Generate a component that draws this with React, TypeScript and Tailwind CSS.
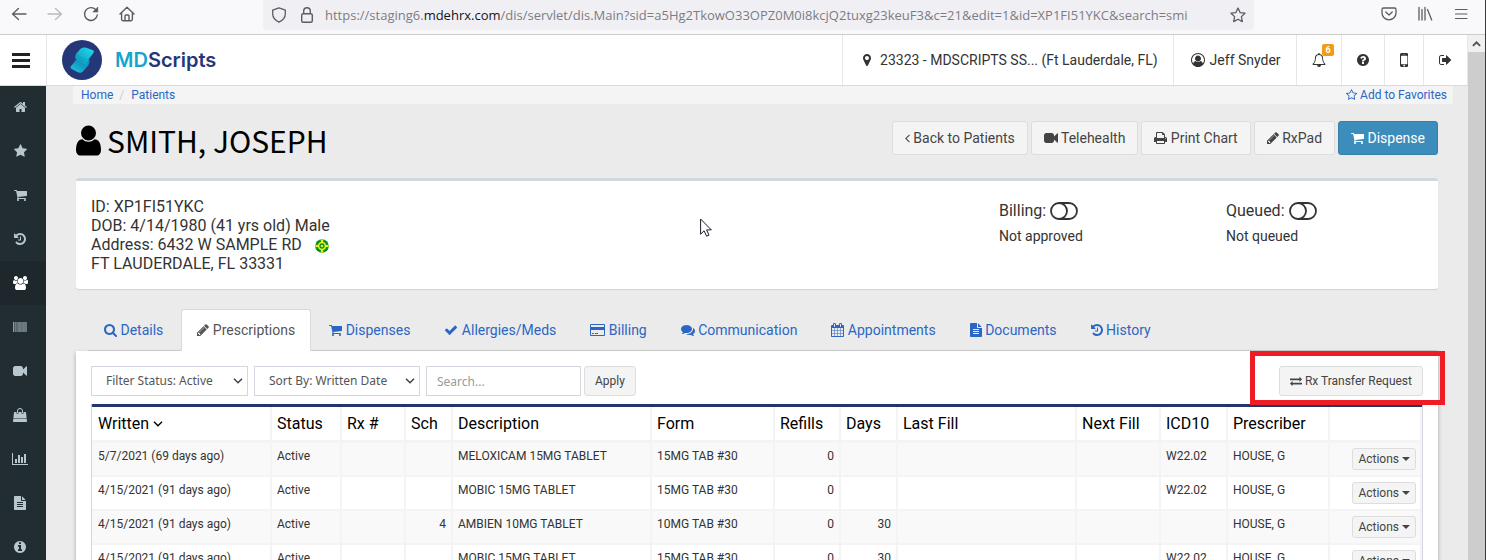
import type { ReactNode } from "react";

type IconDef = { box: string; d: string };

const ICONS = {
  home: {
    box: "64 0 1664 1792",
    d: "M1472 992v480q0 26-19 45t-45 19h-384v-384h-256v384h-384q-26 0-45-19t-19-45v-480q0-1 .5-3t.5-3l575-474 575 474q1 2 1 6zm223-69l-62 74q-8 9-21 11h-3q-13 0-21-7l-692-577-692 577q-12 8-24 7-13-2-21-11l-62-74q-8-10-7-23.5t11-21.5l719-599q32-26 76-26t76 26l244 204v-195q0-14 9-23t23-9h192q14 0 23 9t9 23v408l219 182q10 8 11 21.5t-7 23.5z",
  },
  star: {
    box: "64 0 1664 1792",
    d: "M1728 647q0 22-26 48l-363 354 86 500q1 7 1 20 0 21-10.5 35.5t-30.5 14.5q-19 0-40-12l-449-236-449 236q-22 12-40 12-21 0-31.5-14.5t-10.5-35.5q0-6 2-20l86-500-364-354q-25-27-25-48 0-37 56-46l502-73 225-455q19-41 49-41t49 41l225 455 502 73q56 9 56 46z",
  },
  starOutline: {
    box: "64 0 1664 1792",
    d: "M1201 1004l306-297-422-62-189-382-189 382-422 62 306 297-73 421 378-199 377 199zm527-357q0 22-26 48l-363 354 86 500q1 7 1 20 0 50-41 50-19 0-40-12l-449-236-449 236q-22 12-40 12-21 0-31.5-14.5t-10.5-35.5q0-6 2-20l86-500-364-354q-25-27-25-48 0-37 56-46l502-73 225-455q19-41 49-41t49 41l225 455 502 73q56 9 56 46z",
  },
  cart: {
    box: "64 0 1664 1792",
    d: "M704 1536q0 52-38 90t-90 38-90-38-38-90 38-90 90-38 90 38 38 90zm896 0q0 52-38 90t-90 38-90-38-38-90 38-90 90-38 90 38 38 90zm128-1088v512q0 24-16.5 42.5t-40.5 21.5l-1044 122q13 60 13 70 0 16-24 64h920q26 0 45 19t19 45-19 45-45 19h-1024q-26 0-45-19t-19-45q0-11 8-31.5t16-36 21.5-40 15.5-29.5l-177-823h-204q-26 0-45-19t-19-45 19-45 45-19h256q16 0 28.5 6.5t19.5 15.5 13 24.5 8 26 5.5 29.5 4.5 26h1201q26 0 45 19t19 45z",
  },
  history: {
    box: "128 0 1536 1792",
    d: "M1664 896q0 156-61 298t-164 245-245 164-298 61q-172 0-327-72.5t-264-204.5q-7-10-6.5-22.5t8.5-20.5l137-138q10-9 25-9 16 2 23 12 73 95 179 147t225 52q104 0 198.5-40.5t163.5-109.5 109.5-163.5 40.5-198.5-40.5-198.5-109.5-163.5-163.5-109.5-198.5-40.5q-98 0-188 35.5t-160 101.5l137 138q31 30 14 69-17 40-59 40h-448q-26 0-45-19t-19-45v-448q0-42 40-59 39-17 69 14l130 129q107-101 244.5-156.5t284.5-55.5q156 0 298 61t245 164 164 245 61 298zm-640-288v448q0 14-9 23t-23 9h-320q-14 0-23-9t-9-23v-64q0-14 9-23t23-9h224v-352q0-14 9-23t23-9h64q14 0 23 9t9 23z",
  },
  users: {
    box: "64 0 1920 1792",
    d: "M657 896q-162 5-265 128h-134q-82 0-138-40.5t-56-118.5q0-353 124-353 6 0 43.5 21t97.5 42.5 119 21.5q67 0 133-23-5 37-5 66 0 159 93 283zm1071 637q0 120-73 189.5t-194 69.5h-874q-121 0-194-69.5t-73-189.5q0-53 3.5-103.5t14-109 26.5-108.5 43-97.5 62-81 85.5-53.5 111.5-20q10 0 43 21.5t73 48 107 48 135 21.5 135-21.5 107-48 73-48 43-21.5q61 0 111.5 20t85.5 53.5 62 81 43 97.5 26.5 108.5 14 109 3.5 103.5zm-1024-1277q0 106-75 181t-181 75-181-75-75-181 75-181 181-75 181 75 75 181zm704 384q0 159-112.5 271.5t-271.5 112.5-271.5-112.5-112.5-271.5 112.5-271.5 271.5-112.5 271.5 112.5 112.5 271.5zm576 225q0 78-56 118.5t-138 40.5h-134q-103-123-265-128 93-124 93-283 0-29-5-66 66 23 133 23 59 0 119-21.5t97.5-42.5 43.5-21q124 0 124 353zm-128-609q0 106-75 181t-181 75-181-75-75-181 75-181 181-75 181 75 75 181z",
  },
  barcode: {
    box: "0 0 1792 1792",
    d: "M0 256h63v1280h-63zM94 256h32v1280h-32zM190 256h31v1280h-31zM346 256h31v1280h-31zM503 256h62v1280h-62zM659 256h32v1280h-32zM722 256h31v1280h-31zM785 256h31v1280h-31zM942 256h62v1280h-62zM1099 256h62v1280h-62zM1224 256h62v1280h-62zM1318 256h32v1280h-32zM1444 256h62v1280h-62zM1601 256h62v1280h-62zM1695 256h32v1280h-32zM1760 256h32v1280h-32zM250 256h40v1280h-40zM420 256h40v1280h-40zM860 256h40v1280h-40zM1380 256h30v1280h-30z",
  },
  video: {
    box: "0 0 1792 1792",
    d: "M1792 352v1088q0 42-39 59-13 5-25 5-27 0-45-19l-403-403v166q0 119-84.5 203.5t-203.5 84.5h-704q-119 0-203.5-84.5t-84.5-203.5v-704q0-119 84.5-203.5t203.5-84.5h704q119 0 203.5 84.5t84.5 203.5v165l403-402q18-19 45-19 12 0 25 5 39 17 39 59z",
  },
  bag: {
    box: "0 0 1792 1792",
    d: "M1757 1408l35 313q3 28-16 50-19 21-48 21h-1664q-29 0-48-21-19-22-16-50l35-313h1722zm-93-839l86 775h-1708l86-775q3-24 21-40.5t43-16.5h256v128q0 53 37.5 90.5t90.5 37.5 90.5-37.5 37.5-90.5v-128h384v128q0 53 37.5 90.5t90.5 37.5 90.5-37.5 37.5-90.5v-128h256q25 0 43 16.5t21 40.5zm-384-185v256q0 26-19 45t-45 19-45-19-19-45v-256q0-106-75-181t-181-75-181 75-75 181v256q0 26-19 45t-45 19-45-19-19-45v-256q0-159 112.5-271.5t271.5-112.5 271.5 112.5 112.5 271.5z",
  },
  chart: {
    box: "0 0 2048 1792",
    d: "M640 896v512h-256v-512h256zm384-512v1024h-256v-1024h256zm1024 1152v128h-2048v-1536h128v1408h1920zm-640-896v768h-256v-768h256zm384-384v1152h-256v-1152h256z",
  },
  file: {
    box: "128 0 1536 1792",
    d: "M1596 476q14 14 28 36h-472v-472q22 14 36 28zm-476 164h544v1056q0 40-28 68t-68 28h-1344q-40 0-68-28t-28-68v-1600q0-40 28-68t68-28h800v544q0 40 28 68t68 28zm160 736v-64q0-14-9-23t-23-9h-704q-14 0-23 9t-9 23v64q0 14 9 23t23 9h704q14 0 23-9t9-23zm0-256v-64q0-14-9-23t-23-9h-704q-14 0-23 9t-9 23v64q0 14 9 23t23 9h704q14 0 23-9t9-23zm0-256v-64q0-14-9-23t-23-9h-704q-14 0-23 9t-9 23v64q0 14 9 23t23 9h704q14 0 23-9t9-23z",
  },
  info: {
    box: "128 0 1536 1792",
    d: "M1152 1376v-160q0-14-9-23t-23-9h-96v-512q0-14-9-23t-23-9h-320q-14 0-23 9t-9 23v160q0 14 9 23t23 9h96v320h-96q-14 0-23 9t-9 23v160q0 14 9 23t23 9h448q14 0 23-9t9-23zm-128-896v-160q0-14-9-23t-23-9h-192q-14 0-23 9t-9 23v160q0 14 9 23t23 9h192q14 0 23-9t9-23zm640 416q0 209-103 385.5t-279.5 279.5-385.5 103-385.5-103-279.5-279.5-103-385.5 103-385.5 279.5-279.5 385.5-103 385.5 103 279.5 279.5 103 385.5z",
  },
  question: {
    box: "128 0 1536 1792",
    d: "M1024 1376v-192q0-14-9-23t-23-9h-192q-14 0-23 9t-9 23v192q0 14 9 23t23 9h192q14 0 23-9t9-23zm256-672q0-88-55.5-163t-138.5-116-170-41q-243 0-371 213-15 24 8 42l132 100q7 6 19 6 16 0 25-12 53-68 86-92 34-24 86-24 48 0 85.5 26t37.5 59q0 38-20 61t-68 45q-63 28-115.5 86.5t-52.5 125.5v36q0 14 9 23t23 9h192q14 0 23-9t9-23q0-19 21.5-49.5t54.5-49.5q32-18 49-28.5t46-35 44.5-48 28-60.5 12.5-81zm384 192q0 209-103 385.5t-279.5 279.5-385.5 103-385.5-103-279.5-279.5-103-385.5 103-385.5 279.5-279.5 385.5-103 385.5 103 279.5 279.5 103 385.5z",
  },
  user: {
    box: "256 0 1280 1792",
    d: "M1536 1399q0 109-62.5 187t-150.5 78h-854q-88 0-150.5-78t-62.5-187q0-85 8.5-160.5t31.5-152 58.5-131 94-89 134.5-34.5q131 128 313 128t313-128q76 0 134.5 34.5t94 89 58.5 131 31.5 152 8.5 160.5zm-256-887q0 159-112.5 271.5t-271.5 112.5-271.5-112.5-112.5-271.5 112.5-271.5 271.5-112.5 271.5 112.5 112.5 271.5z",
  },
  marker: {
    box: "384 0 1024 1792",
    d: "M1152 640q0-106-75-181t-181-75-181 75-75 181 75 181 181 75 181-75 75-181zm256 0q0 109-33 179l-364 774q-16 33-47.5 52t-67.5 19-67.5-19-46.5-52l-365-774q-33-70-33-179 0-212 150-362t362-150 362 150 150 362z",
  },
  userCircle: {
    box: "0 0 1792 1792",
    d: "M896 0q182 0 348 71t286 191 191 286 71 348q0 181-70.5 347t-190.5 286-286 191.5-349 71.5-349-71-285.5-191.5-190.5-286-71-347.5 71-348 191-286 286-191 348-71zm619 1351q149-205 149-455 0-156-61-298t-164-245-245-164-298-61-298 61-245 164-164 245-61 298q0 250 149 455 66-327 306-327 131 128 313 128t313-128q240 0 306 327zm-235-647q0-159-112.5-271.5t-271.5-112.5-271.5 112.5-112.5 271.5 112.5 271.5 271.5 112.5 271.5-112.5 112.5-271.5z",
  },
  bell: {
    box: "0 0 1792 1792",
    d: "M912 1696q0-16-16-16-59 0-101.5-42.5t-42.5-101.5q0-16-16-16t-16 16q0 73 51.5 124.5t124.5 51.5q16 0 16-16zm-666-288h1300q-266-300-266-832 0-51-24-105t-69-103-121.5-80.5-169.5-31.5-169.5 31.5-121.5 80.5-69 103-24 105q0 532-266 832zm1482 0q0 52-38 90t-90 38h-448q0 106-75 181t-181 75-181-75-75-181h-448q-52 0-90-38t-38-90q50-42 91-88t85-119.5 74.5-158.5 50-206 19.5-260q0-152 117-282.5t307-158.5q-8-19-8-39 0-40 28-68t68-28 68 28 28 68q0 20-8 39 190 28 307 158.5t117 282.5q0 139 19.5 260t50 206 74.5 158.5 85 119.5 91 88z",
  },
  mobile: {
    box: "512 256 768 1280",
    d: "M976 1408q0-33-23.5-56.5t-56.5-23.5-56.5 23.5-23.5 56.5 23.5 56.5 56.5 23.5 56.5-23.5 23.5-56.5zm208-160v-704q0-13-9.5-22.5t-22.5-9.5h-512q-13 0-22.5 9.5t-9.5 22.5v704q0 13 9.5 22.5t22.5 9.5h512q13 0 22.5-9.5t9.5-22.5zm-192-848q0-16-16-16h-160q-16 0-16 16t16 16h160q16 0 16-16zm288-16v1024q0 52-38 90t-90 38h-512q-52 0-90-38t-38-90v-1024q0-52 38-90t90-38h512q52 0 90 38t38 90z",
  },
  signOut: {
    box: "64 0 1664 1792",
    d: "M704 1440q0 4 1 20t.5 26.5-3 23.5-10 19.5-20.5 6.5h-320q-119 0-203.5-84.5t-84.5-203.5v-704q0-119 84.5-203.5t203.5-84.5h320q13 0 22.5 9.5t9.5 22.5q0 4 1 20t.5 26.5-3 23.5-10 19.5-20.5 6.5h-320q-66 0-113 47t-47 113v704q0 66 47 113t113 47h312l11.5 1 11.5 3 8 5.5 7 9 2 13.5zm928-544q0 26-19 45l-544 544q-19 19-45 19t-45-19-19-45v-288h-448q-26 0-45-19t-19-45v-384q0-26 19-45t45-19h448v-288q0-26 19-45t45-19 45 19l544 544q19 19 19 45z",
  },
  pencil: {
    box: "128 0 1536 1792",
    d: "M491 1536l91-91-235-235-91 91v107h128v128h107zm523-928q0-22-22-22-10 0-17 7l-542 542q-7 7-7 17 0 22 22 22 10 0 17-7l542-542q7-7 7-17zm-54-192l416 416-832 832h-416v-416zm683 96q0 53-37 90l-166 166-416-416 166-165q36-38 90-38 53 0 91 38l235 234q37 39 37 91z",
  },
  search: {
    box: "64 0 1664 1792",
    d: "M1216 832q0-185-131.5-316.5t-316.5-131.5-316.5 131.5-131.5 316.5 131.5 316.5 316.5 131.5 316.5-131.5 131.5-316.5zm512 832q0 52-38 90t-90 38q-54 0-90-38l-343-342q-179 124-399 124-143 0-273.5-55.5t-225-150-150-225-55.5-273.5 55.5-273.5 150-225 225-150 273.5-55.5 273.5 55.5 225 150 150 225 55.5 273.5q0 220-124 399l343 343q37 37 37 90z",
  },
  print: {
    box: "64 0 1664 1792",
    d: "M448 1536h896v-256h-896v256zm0-640h896v-384h-160q-40 0-68-28t-28-68v-160h-640v640zm1152 64q0-26-19-45t-45-19-45 19-19 45 19 45 45 19 45-19 19-45zm128 0v416q0 13-9.5 22.5t-22.5 9.5h-224v160q0 40-28 68t-68 28h-960q-40 0-68-28t-28-68v-160h-224q-13 0-22.5-9.5t-9.5-22.5v-416q0-79 56.5-135.5t135.5-56.5h64v-544q0-40 28-68t68-28h672q40 0 88 20t76 48l152 152q28 28 48 76t20 88v256h64q79 0 135.5 56.5t56.5 135.5z",
  },
  check: {
    box: "0 0 1792 1792",
    d: "M1671 566q0 40-28 68l-724 724-136 136q-28 28-68 28t-68-28l-136-136-362-362q-28-28-28-68t28-68l136-136q28-28 68-28t68 28l294 295 656-657q28-28 68-28t68 28l136 136q28 28 28 68z",
  },
  card: {
    box: "0 0 1920 1792",
    d: "M1760 128q66 0 113 47t47 113v1216q0 66-47 113t-113 47h-1600q-66 0-113-47t-47-113v-1216q0-66 47-113t113-47h1600zm-1600 128q-13 0-22.5 9.5t-9.5 22.5v224h1664v-224q0-13-9.5-22.5t-22.5-9.5h-1600zm1600 1280q13 0 22.5-9.5t9.5-22.5v-608h-1664v608q0 13 9.5 22.5t22.5 9.5h1600zm-1504-128v-128h256v128h-256zm384 0v-128h384v128h-384z",
  },
  comments: {
    box: "0 0 1792 1792",
    d: "M1408 768q0 139-94 257t-256.5 186.5-353.5 68.5q-86 0-176-16-124 88-278 128-36 9-86 16h-3q-11 0-20.5-8t-11.5-21q-1-3-1-6.5t.5-6.5 2-6l2.5-5 3.5-5.5 4-5 4.5-5 4-4.5q5-6 23-25t26-29.5 22.5-29 25-38.5 20.5-44q-124-72-195-177t-71-224q0-139 94-257t256.5-186.5 353.5-68.5 353.5 68.5 256.5 186.5 94 257zm384 256q0 120-71 224.5t-195 176.5q10 24 20.5 44t25 38.5 22.5 29 26 29.5 23 25q1 1 4 4.5t4.5 5 4 5 3.5 5.5l2.5 5 2 6 .5 6.5-1 6.5q-3 14-13 22t-22 7q-50-7-86-16-154-40-278-128-90 16-176 16-271 0-472-132 58 4 88 4 161 0 309-45t264-129q125-92 192-212t67-254q0-77-23-152 129 71 204 178t75 230z",
  },
  calendar: {
    box: "64 0 1664 1792",
    d: "M192 1664h288v-288h-288v288zm352 0h320v-288h-320v288zm-352-352h288v-320h-288v320zm352 0h320v-320h-320v320zm-352-384h288v-288h-288v288zm736 736h320v-288h-320v288zm-384-736h320v-288h-320v288zm768 736h288v-288h-288v288zm-384-352h320v-320h-320v320zm-352-864v-288q0-13-9.5-22.5t-22.5-9.5h-64q-13 0-22.5 9.5t-9.5 22.5v288q0 13 9.5 22.5t22.5 9.5h64q13 0 22.5-9.5t9.5-22.5zm736 864h288v-320h-288v320zm-384-384h320v-288h-320v288zm384 0h288v-288h-288v288zm32-480v-288q0-13-9.5-22.5t-22.5-9.5h-64q-13 0-22.5 9.5t-9.5 22.5v288q0 13 9.5 22.5t22.5 9.5h64q13 0 22.5-9.5t9.5-22.5zm384-64v1280q0 52-38 90t-90 38h-1408q-52 0-90-38t-38-90v-1280q0-52 38-90t90-38h128v-96q0-66 47-113t113-47h64q66 0 113 47t47 113v96h384v-96q0-66 47-113t113-47h64q66 0 113 47t47 113v96h128q52 0 90 38t38 90z",
  },
  exchange: {
    box: "0 0 1792 1792",
    d: "M1792 1184v192q0 13-9.5 22.5t-22.5 9.5h-1376v192q0 13-9.5 22.5t-22.5 9.5q-12 0-24-10l-319-320q-9-9-9-22 0-14 9-23l320-320q9-9 23-9 13 0 22.5 9.5t9.5 22.5v192h1376q13 0 22.5 9.5t9.5 22.5zm0-544q0 14-9 23l-320 320q-9 9-23 9-13 0-22.5-9.5t-9.5-22.5v-192h-1376q-13 0-22.5-9.5t-9.5-22.5v-192q0-13 9.5-22.5t22.5-9.5h1376v-192q0-14 9-23t23-9q12 0 24 10l319 319q9 9 9 23z",
  },
  angleLeft: {
    box: "595 0 640 1792",
    d: "M1203 544q0 13-10 23l-393 393 393 393q10 10 10 23t-10 23l-50 50q-10 10-23 10t-23-10l-466-466q-10-10-10-23t10-23l466-466q10-10 23-10t23 10l50 50q10 10 10 23z",
  },
} satisfies Record<string, IconDef>;

type IconName = keyof typeof ICONS;

function Icon({ name, className = "h-[14px]" }: { name: IconName; className?: string }) {
  return (
    <svg
      viewBox={ICONS[name].box}
      className={`inline-block w-auto shrink-0 fill-current align-[-2px] ${className}`}
      aria-hidden="true"
    >
      <path d={ICONS[name].d} />
    </svg>
  );
}

const CHROME_BUTTON = "flex h-7 w-7 items-center justify-center";

function BrowserBar() {
  return (
    <div className="flex h-[35px] shrink-0 items-start border-b border-[#cccccc] bg-[#f9f9fb] text-[#5b5b66]">
      <div className="flex w-[263px] shrink-0 items-center gap-2 pl-[5px]">
        <button type="button" aria-label="Back" className={CHROME_BUTTON}>
          <svg viewBox="0 0 16 16" className="h-4 w-4 fill-none stroke-current stroke-[1.3]">
            <path d="M15 8H1.5M7.5 2.5L1.5 8l6 5.5" strokeLinecap="round" strokeLinejoin="round" />
          </svg>
        </button>
        <button type="button" aria-label="Forward" className={`${CHROME_BUTTON} text-[#b9b9be]`}>
          <svg viewBox="0 0 16 16" className="h-4 w-4 fill-none stroke-current stroke-[1.3]">
            <path d="M1 8h13.5M8.5 2.5l6 5.5-6 5.5" strokeLinecap="round" strokeLinejoin="round" />
          </svg>
        </button>
        <button type="button" aria-label="Reload" className={CHROME_BUTTON}>
          <svg viewBox="0 0 16 16" className="h-4 w-4 fill-none stroke-current stroke-[1.4]">
            <path d="M14.3 9A6.4 6.4 0 1 1 12.6 3.6" strokeLinecap="round" />
            <path d="M14.8 1v5h-5z" className="fill-current" strokeLinejoin="round" strokeWidth="0.6" />
          </svg>
        </button>
        <button type="button" aria-label="Home page" className={CHROME_BUTTON}>
          <svg viewBox="0 0 16 16" className="h-4 w-4 fill-none stroke-current stroke-[1.4]">
            <path d="M1 8l7-6.8L15 8M2.6 7v6.3a1.4 1.4 0 0 0 1.4 1.4h8a1.4 1.4 0 0 0 1.4-1.4V7" strokeLinecap="round" strokeLinejoin="round" />
            <path d="M6 14.5V10a1 1 0 0 1 1-1h2a1 1 0 0 1 1 1v4.5" />
          </svg>
        </button>
      </div>
      <div className="flex h-[30px] min-w-0 flex-1 items-center rounded-b bg-[#f0f0f4] pr-2 pl-2">
        <svg viewBox="0 0 16 16" className="h-4 w-4 shrink-0 fill-none stroke-current stroke-[1.3]" aria-hidden="true">
          <path d="M8 .9l6.3 2.200v3.700c0 3.800-3.300 7-6.300 8.400-3-1.400-6.300-4.600-6.300-8.400V3.100z" strokeLinejoin="round" />
        </svg>
        <svg viewBox="0 0 16 16" className="ml-3 h-4 w-4 shrink-0 fill-none stroke-current stroke-[1.4]" aria-hidden="true">
          <rect x="2.7" y="6.7" width="10.6" height="8.5" rx="1.5" />
          <path d="M4.7 6.7V4a3.3 3.3 0 0 1 6.6 0v2.700" />
        </svg>
        <div className="relative ml-[10px] min-w-0 flex-1 overflow-hidden font-['Open_Sans',sans-serif] text-[13px] leading-5 whitespace-nowrap text-[#7c7c85]">
          https://staging6.<span className="text-[#15141a]">mdehrx.com</span>
          /dis/servlet/dis.Main?sid=a5Hg2TkowO33OPZ0M0i8kcjQ2tuxg23keuF3&amp;c=21&amp;edit=1&amp;id=XP1FI51YKC&amp;search=smi
          <span className="absolute inset-y-0 right-0 w-6 bg-linear-to-r from-transparent to-[#f0f0f4]" />
        </div>
        <button type="button" aria-label="Bookmark" className="ml-2 shrink-0">
          <svg viewBox="0 0 16 16" className="h-4 w-4 fill-none stroke-current stroke-[1.3]">
            <path d="M8 1l2.1 4.600 4.900.6-3.600 3.400.9 5L8 12.200l-4.300 2.400.9-5L1 6.200l4.900-.6z" strokeLinejoin="round" />
          </svg>
        </button>
      </div>
      <div className="flex w-[231px] shrink-0 items-center justify-end gap-2 pr-[10px]">
        <button type="button" aria-label="Pocket" className={CHROME_BUTTON}>
          <svg viewBox="0 0 16 16" className="h-4 w-4 fill-none stroke-current stroke-[1.3]">
            <path d="M2.5 2h11a1.5 1.5 0 0 1 1.5 1.5V7A7 6.800 0 0 1 1 7V3.500A1.500 1.500 0 0 1 2.500 2z" />
            <path d="M4.8 6L8 9l3.200-3" strokeLinecap="round" strokeLinejoin="round" />
          </svg>
        </button>
        <button type="button" aria-label="Library" className={CHROME_BUTTON}>
          <svg viewBox="0 0 16 16" className="h-4 w-4 fill-none stroke-current stroke-[1.3]">
            <path d="M2 1.5v12.500M5 3.500v10.500M8 1.500v12.500M10.500 3.500l4.200 10.500" strokeLinecap="round" />
          </svg>
        </button>
        <button type="button" aria-label="Application menu" className={CHROME_BUTTON}>
          <svg viewBox="0 0 16 16" className="h-4 w-4 fill-none stroke-current stroke-[1.2]">
            <path d="M2.5 3.500h11.500M2.500 8h11.500M2.500 12.500h11.500" strokeLinecap="round" />
          </svg>
        </button>
      </div>
    </div>
  );
}

const HEADER_ITEM = "flex h-full items-center border-l border-[#e7e7e7] px-[15px]";

function Header() {
  return (
    <header className="relative z-10 flex h-[50px] shrink-0 items-center border-r border-[#e7e7e7] bg-white text-[14px] text-[#333333] shadow-[0_1px_0_#d9dcdc]">
      <button type="button" aria-label="Toggle navigation" className="flex h-full w-[46px] items-center pl-3">
        <span className="flex w-[18px] flex-col gap-[3px]">
          <span className="h-[3px] bg-[#222222]" />
          <span className="h-[3px] bg-[#222222]" />
          <span className="h-[3px] bg-[#222222]" />
        </span>
      </button>
      <a href="#home" className="flex h-full items-center border-l border-[#e7e7e7] pl-[15px]">
        <svg viewBox="0 0 40 40" className="h-10 w-10" aria-hidden="true">
          <defs>
            <linearGradient id="ribbonTop" x1="1" y1="0" x2="0" y2="1">
              <stop offset="0" stopColor="#22dcea" />
              <stop offset="0.55" stopColor="#16b4d2" />
              <stop offset="1" stopColor="#0f86b4" />
            </linearGradient>
            <linearGradient id="ribbonBottom" x1="1" y1="0" x2="0" y2="1">
              <stop offset="0" stopColor="#0f86b4" />
              <stop offset="0.5" stopColor="#129cc4" />
              <stop offset="1" stopColor="#1fd0e4" />
            </linearGradient>
          </defs>
          <circle cx="20" cy="20" r="20" fill="#253778" />
          <path d="M14 20l13-1.500q1.600 4-1 7.200l-5 5.800q-2.300 2-5.200.8l-6.500-3.500q-1.300-1-.3-2.500z" fill="url(#ribbonBottom)" />
          <path d="M18.500 8.800q3-1.900 6-1l6.500 2.400q1.500.9.500 2.600L26 20.200q-1 3.500-1.500 5.300-2.500-3-7-3.500-6-2-3.500-8z" fill="url(#ribbonTop)" />
          <path d="M14 15.500q2 4.500 11.500 7M14.800 13.500q3 5 11.200 6.700" fill="none" stroke="#0f8fbb" strokeWidth="0.6" />
        </svg>
        <span className="ml-[13px] font-['Inter',sans-serif] text-[20px] leading-6 font-semibold text-[#253778]">
          <span className="text-[#14a5cc]">MD</span>Scripts
        </span>
      </a>
      <nav aria-label="Account" className="ml-auto flex h-full">
        <a href="#location" className={HEADER_ITEM}>
          <span className="mr-1 flex w-[18px] justify-center">
            <Icon name="marker" />
          </span>
          23323 - MDSCRIPTS SS... (Ft Lauderdale, FL)
        </a>
        <a href="#profile" className={HEADER_ITEM}>
          <span className="mr-[3px] flex w-[18px] justify-center">
            <Icon name="userCircle" />
          </span>
          Jeff Snyder
        </a>
        <a href="#alerts" aria-label="6 notifications" className={`${HEADER_ITEM} relative`}>
          <Icon name="bell" />
          <span className="absolute top-[9px] right-[7px] rounded-[2px] bg-[#f39c12] px-[3px] text-[9px] leading-3 font-bold text-white">
            6
          </span>
        </a>
        <a href="#help" aria-label="Help" className={HEADER_ITEM}>
          <Icon name="question" />
        </a>
        <a href="#mobile" aria-label="Mobile" className={HEADER_ITEM}>
          <Icon name="mobile" />
        </a>
        <a href="#signout" aria-label="Sign out" className={HEADER_ITEM}>
          <Icon name="signOut" />
        </a>
      </nav>
    </header>
  );
}

const SIDE_ITEMS: { icon: IconName; label: string; active?: boolean }[] = [
  { icon: "home", label: "Home" },
  { icon: "star", label: "Favorites" },
  { icon: "cart", label: "Dispense" },
  { icon: "history", label: "History" },
  { icon: "users", label: "Patients", active: true },
  { icon: "barcode", label: "Inventory" },
  { icon: "video", label: "Telehealth" },
  { icon: "bag", label: "Orders" },
  { icon: "chart", label: "Reports" },
  { icon: "file", label: "Documents" },
  { icon: "info", label: "Information" },
];

function Sidebar() {
  return (
    <nav aria-label="Main" className="w-[46px] shrink-0 bg-[#222d32]">
      {SIDE_ITEMS.map((item) => (
        <a
          key={item.label}
          href={`#${item.label}`}
          aria-label={item.label}
          className={`flex h-11 items-center justify-center pr-[6px] ${item.active ? "bg-[#1e282c] text-white" : "text-[#b8c7ce]"}`}
        >
          <Icon name={item.icon} />
        </a>
      ))}
    </nav>
  );
}

function ActionButton({ icon, primary, children }: { icon: IconName; primary?: boolean; children: ReactNode }) {
  return (
    <button
      type="button"
      className={`h-[34px] rounded-[3px] border px-3 text-[14px] whitespace-nowrap ${
        primary ? "border-[#367fa9] bg-[#3c8dbc] text-white" : "border-[#dddddd] bg-[#f4f4f4] text-[#444444]"
      }`}
    >
      <Icon name={icon} /> {children}
    </button>
  );
}

function ToggleOff({ label, status }: { label: string; status: string }) {
  return (
    <div className="px-[15px]">
      <div className="flex h-7 items-center gap-1">
        <span className="text-[16px]">{label}:</span>
        <button type="button" role="switch" aria-checked="false" aria-label={label}>
          <svg viewBox="0 0 28 18" className="block h-[18px] w-7 fill-none stroke-[#333333] stroke-[1.8]">
            <rect x="1" y="1" width="26" height="16" rx="8" />
            <path d="M9 1a8 8 0 0 1 0 16" />
          </svg>
        </button>
      </div>
      <div className="mt-px text-[14px] leading-5">{status}</div>
    </div>
  );
}

const TABS: { icon: IconName; label: string; active?: boolean }[] = [
  { icon: "search", label: "Details" },
  { icon: "pencil", label: "Prescriptions", active: true },
  { icon: "cart", label: "Dispenses" },
  { icon: "check", label: "Allergies/Meds" },
  { icon: "card", label: "Billing" },
  { icon: "comments", label: "Communication" },
  { icon: "calendar", label: "Appointments" },
  { icon: "file", label: "Documents" },
  { icon: "history", label: "History" },
];

function FilterSelect({ label, value, width }: { label: string; value: string; width: string }) {
  return (
    <div className={`relative ${width}`}>
      <select
        aria-label={label}
        className="block h-[30px] w-full appearance-none border border-[#d2d6de] bg-white pl-[14px] font-['Noto_Sans',sans-serif] text-[12px] text-[#555555]"
      >
        <option>{value}</option>
      </select>
      <svg
        viewBox="0 0 10 6"
        className="pointer-events-none absolute top-3 right-[5px] h-[6px] w-[10px] fill-none stroke-[#444444] stroke-[1.5]"
        aria-hidden="true"
      >
        <path d="M1 .8l4 4 4-4" />
      </svg>
    </div>
  );
}

const COLUMNS: { label: string; width: string; pad: string }[] = [
  { label: "Written", width: "w-[180px]", pad: "pr-[5px] pl-[6px]" },
  { label: "Status", width: "w-[70px]", pad: "px-[5px]" },
  { label: "Rx #", width: "w-[64px]", pad: "px-[5px]" },
  { label: "Sch", width: "w-[47px]", pad: "px-[5px] text-right" },
  { label: "Description", width: "w-[199px]", pad: "px-[5px]" },
  { label: "Form", width: "w-[123px]", pad: "px-[5px]" },
  { label: "Refills", width: "w-[66px]", pad: "px-[5px] text-right" },
  { label: "Days", width: "w-[57px]", pad: "px-[5px] text-right" },
  { label: "Last Fill", width: "w-auto", pad: "px-[5px]" },
  { label: "Next Fill", width: "w-[84px]", pad: "px-[5px]" },
  { label: "ICD10", width: "w-[67px]", pad: "px-[5px]" },
  { label: "Prescriber", width: "w-[102px]", pad: "px-[5px]" },
];

const ROWS: string[][] = [
  ["5/7/2021 (69 days ago)", "Active", "", "", "MELOXICAM 15MG TABLET", "15MG TAB #30", "0", "", "", "", "W22.02", "HOUSE, G"],
  ["4/15/2021 (91 days ago)", "Active", "", "", "MOBIC 15MG TABLET", "15MG TAB #30", "0", "", "", "", "W22.02", "HOUSE, G"],
  ["4/15/2021 (91 days ago)", "Active", "", "4", "AMBIEN 10MG TABLET", "10MG TAB #30", "0", "30", "", "", "", "HOUSE, G"],
  ["4/15/2021 (91 days ago)", "Active", "", "", "MOBIC 15MG TABLET", "15MG TAB #30", "0", "30", "", "", "W22.02", "HOUSE, G"],
];

function PrescriptionTable() {
  return (
    <div className="mt-2 rounded-t-[2px] border-x border-t-[3px] border-x-[#d2d6de] border-t-[#22356f]">
      <table className="w-full table-fixed border-separate border-spacing-0">
        <thead>
          <tr className="h-9 text-[16px] text-black">
            {COLUMNS.map((col) => (
              <th
                key={col.label}
                scope="col"
                className={`border-r-2 border-b-[3px] border-[#f4f4f4] font-normal whitespace-nowrap ${col.width} ${col.pad} !text-left`}
              >
                {col.label}
                {col.label === "Written" && (
                  <svg viewBox="0 0 10 6" className="ml-1 inline h-[6px] w-[10px] fill-none stroke-black stroke-[1.4]" aria-hidden="true">
                    <path d="M1 .8l4 4 4-4" />
                  </svg>
                )}
              </th>
            ))}
            <td className="w-[92px] border-r-2 border-b-[3px] border-[#f4f4f4]" />
          </tr>
        </thead>
        <tbody>
          {ROWS.map((row, r) => (
            <tr key={r} className="align-top text-[12px] leading-4 text-[#333333] odd:bg-[#f9f9f9]">
              {row.map((cell, c) => (
                <td key={c} className={`border-r-2 border-b-2 border-[#f4f4f4] py-[5px] whitespace-nowrap ${COLUMNS[c].pad}`}>
                  {cell}
                </td>
              ))}
              <td className="border-r-2 border-b-2 border-[#f4f4f4] py-[5px] pr-1">
                <button
                  type="button"
                  className="ml-auto flex h-[22px] items-center gap-[3px] rounded-[3px] border border-[#dddddd] bg-[#f4f4f4] px-[5px] text-[12px] text-[#444444]"
                >
                  Actions
                  <svg viewBox="0 0 8 4" className="h-1 w-2 fill-current" aria-hidden="true">
                    <path d="M0 0h8L4 4z" />
                  </svg>
                </button>
              </td>
            </tr>
          ))}
        </tbody>
      </table>
    </div>
  );
}

function PatientPage() {
  return (
    <main className="min-w-0 flex-1 bg-[#ebebeb] pr-[15px] pl-[27px]">
      <div className="flex h-[19px] items-center rounded-b-[2px] bg-[#f4f4f4] pr-[6px] pl-2 text-[12px] text-[#2b66c4]">
        <nav aria-label="Breadcrumb" className="flex">
          <a href="#home">Home</a>
          <span className="pr-[7px] pl-[6px] text-[#cccccc]">/</span>
          <a href="#patients">Patients</a>
        </nav>
        <a href="#favorites" className="ml-auto">
          <Icon name="starOutline" className="h-3" /> Add to Favorites
        </a>
      </div>

      <div className="pr-[15px] pl-[3px]">
        <div className="mt-[17px] flex h-[34px] items-center">
          <h1 className="flex items-center gap-[6px] pt-1 font-['Noto_Sans_CJK_SC',sans-serif] text-[30px] leading-[34px] text-black">
            <Icon name="user" className="h-[35px]" />
            SMITH, JOSEPH
          </h1>
          <div className="ml-auto flex gap-[3px]">
            <ActionButton icon="angleLeft">Back to Patients</ActionButton>
            <ActionButton icon="video">Telehealth</ActionButton>
            <ActionButton icon="print">Print Chart</ActionButton>
            <ActionButton icon="pencil">RxPad</ActionButton>
            <ActionButton icon="cart" primary>Dispense</ActionButton>
          </div>
        </div>

        <section className="mt-[23px] grid h-[111px] grid-cols-12 rounded-[3px] border-t-[3px] border-[#d2d6de] bg-white pt-4 text-[#333333] shadow-[0_1px_1px_rgba(0,0,0,0.1)]">
          <div className="col-span-8 px-[15px] text-[16px] leading-[19px]">
            <p>ID: XP1FI51YKC</p>
            <p>DOB: 4/14/1980 (41 yrs old) Male</p>
            <p className="flex items-center">
              Address: 6432 W SAMPLE RD
              <a href="#map" aria-label="Show on map" className="ml-[13px]">
                <svg viewBox="0 0 14 14" className="mt-[2px] h-[14px] w-[14px]">
                  <circle cx="7" cy="7" r="6.8" fill="#0c9a1e" />
                  <path d="M7 .5v13M.5 7h13" stroke="#e6f21c" strokeWidth="2.2" />
                  <circle cx="7" cy="7" r="4" fill="#f3f71c" />
                  <path d="M3.5 2L2 3.500M10.500 2L12 3.500M3.500 12L2 10.500M10.500 12l1.500-1.500" stroke="#0a5f14" />
                  <circle cx="7" cy="7" r="2" fill="#d8ef30" stroke="#118a1d" strokeWidth="1.3" />
                </svg>
              </a>
            </p>
            <p>FT LAUDERDALE, FL 33331</p>
          </div>
          <div className="col-span-2">
            <ToggleOff label="Billing" status="Not approved" />
          </div>
          <div className="col-span-2">
            <ToggleOff label="Queued" status="Not queued" />
          </div>
        </section>

        <nav aria-label="Patient sections" className="mt-5 ml-3 flex gap-[2px] border-b border-[#d0d0d0] text-[14px]">
          {TABS.map((tab) => (
            <a
              key={tab.label}
              href={`#${tab.label}`}
              aria-current={tab.active ? "page" : undefined}
              className={`-mb-px h-[42px] rounded-t-[3px] border px-[15px] leading-10 whitespace-nowrap ${
                tab.active ? "border-[#d9d9d9] border-b-white bg-white text-[#555555]" : "border-transparent text-[#2b66c4]"
              }`}
            >
              <Icon name={tab.icon} /> {tab.label}
            </a>
          ))}
        </nav>

        <section className="bg-white px-[15px] pt-[15px] pb-10 shadow-[0_2px_4px_rgba(0,0,0,0.3)]">
          <div className="flex items-center text-[12px]">
            <FilterSelect label="Filter status" value="Filter Status: Active" width="w-[157px]" />
            <div className="ml-[6px]">
              <FilterSelect label="Sort by" value="Sort By: Written Date" width="w-[166px]" />
            </div>
            <input
              type="text"
              aria-label="Search prescriptions"
              placeholder="Search..."
              className="ml-[6px] h-[30px] w-[155px] border border-[#d2d6de] bg-white px-[10px] font-['Noto_Sans',sans-serif] text-[12px] text-[#555555] placeholder:text-[#999999]"
            />
            <button type="button" className="ml-[3px] h-[30px] rounded-[3px] border border-[#dddddd] bg-[#f4f4f4] px-[10px] text-[#444444]">
              Apply
            </button>
            <div className="relative ml-auto">
              <button
                type="button"
                className="block h-[30px] rounded-[3px] border border-[#dddddd] bg-[#f4f4f4] px-[10px] text-[#444444]"
              >
                <Icon name="exchange" className="h-3" /> Rx Transfer Request
              </button>
              <div className="pointer-events-none absolute -top-[15px] -right-[22px] -bottom-[9px] -left-[29px] border-[5px] border-[#ee1c25]" />
            </div>
          </div>
          <PrescriptionTable />
        </section>
      </div>
    </main>
  );
}

function Scrollbar() {
  return (
    <div className="w-[17px] shrink-0 bg-[#cdcdcd]">
      <div className="flex h-[17px] items-center justify-center bg-[#f0f0f0]">
        <svg viewBox="0 0 10 6" className="h-[6px] w-[9px] fill-none stroke-[#505050] stroke-[2]" aria-hidden="true">
          <path d="M1 5.2l4-4 4 4" />
        </svg>
      </div>
    </div>
  );
}

export default function App() {
  return (
    <div className="relative flex h-screen overflow-hidden bg-white pr-px font-['Roboto',sans-serif]">
      <div className="flex min-w-0 flex-1 flex-col border-r border-[#2f3f48]">
        <BrowserBar />
        <div className="flex min-h-0 flex-1">
          <div className="flex min-w-0 flex-1 flex-col">
            <Header />
            <div className="flex min-h-0 flex-1">
              <Sidebar />
              <PatientPage />
            </div>
          </div>
          <Scrollbar />
        </div>
      </div>
      <svg viewBox="0 0 12 19" className="pointer-events-none absolute top-[218px] left-[700px] h-[19px] w-3" aria-hidden="true">
        <path d="M.6 1v15.200l3.500-3.400 2.500 5.400 2.400-1.100-2.400-5.200h4.700z" fill="#ffffff" stroke="#1a1a2a" strokeWidth="1" />
      </svg>
    </div>
  );
}
